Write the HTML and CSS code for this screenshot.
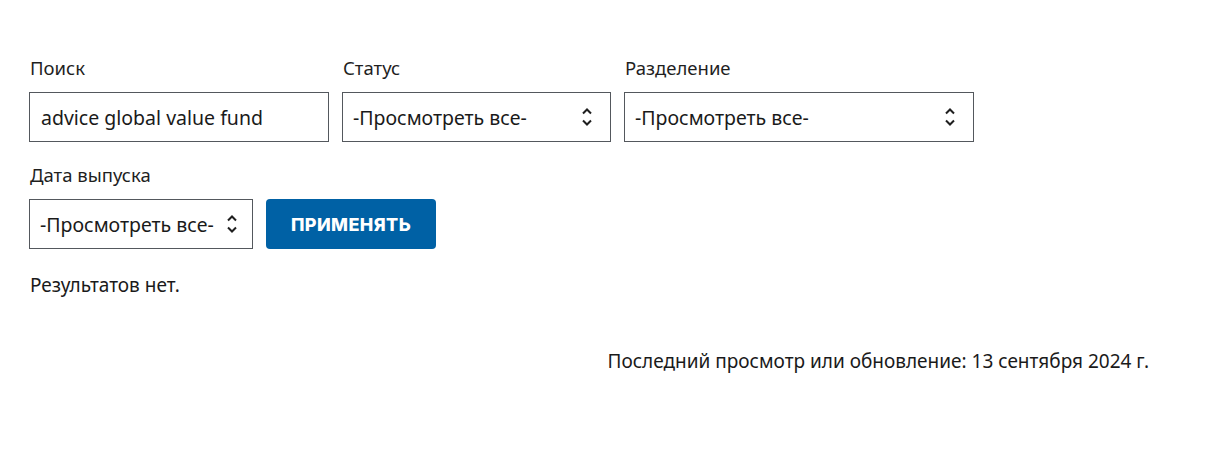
FILE: index.html
```html
<!DOCTYPE html>
<html lang="ru">
<head>
<meta charset="utf-8">
<title>Поиск</title>
<link rel="stylesheet" href="styles.css">
</head>
<body>
<div class="page">
  <form class="filters">
    <div class="row">
      <div class="field">
        <label class="label">Поиск</label>
        <div class="box box-search">advice global value fund</div>
      </div>
      <div class="field">
        <label class="label">Статус</label>
        <div class="box box-select box-status">
          <span>-Просмотреть все-</span>
          <svg class="chev" width="12" height="22" viewBox="0 0 12 22"><path d="M2 7.5 L6 3.5 L10 7.5 M2 14.5 L6 18.5 L10 14.5" fill="none" stroke="#1f1f1f" stroke-width="2"/></svg>
        </div>
      </div>
      <div class="field">
        <label class="label">Разделение</label>
        <div class="box box-select box-division">
          <span>-Просмотреть все-</span>
          <svg class="chev" width="12" height="22" viewBox="0 0 12 22"><path d="M2 7.5 L6 3.5 L10 7.5 M2 14.5 L6 18.5 L10 14.5" fill="none" stroke="#1f1f1f" stroke-width="2"/></svg>
        </div>
      </div>
    </div>
    <div class="row row-2">
      <div class="field">
        <label class="label label-2">Дата выпуска</label>
        <div class="field-line">
          <div class="box box-select box-date">
            <span>-Просмотреть все-</span>
            <svg class="chev" width="12" height="22" viewBox="0 0 12 22"><path d="M2 7.5 L6 3.5 L10 7.5 M2 14.5 L6 18.5 L10 14.5" fill="none" stroke="#1f1f1f" stroke-width="2"/></svg>
          </div>
          <button type="button" class="apply">ПРИМЕНЯТЬ</button>
        </div>
      </div>
    </div>
  </form>
  <p class="empty">Результатов нет.</p>
  <p class="updated">Последний просмотр или обновление: 13 сентября 2024 г.</p>
</div>
</body>
</html>
```

FILE: styles.css
```css
* { box-sizing: border-box; }
html, body { margin: 0; padding: 0; background: #fff; }
body {
  font-family: "Noto Sans", "Open Sans", sans-serif;
  color: #1a1a1a;
}
.page {
  padding: 56px 83px 0 29px;
}
.filters { display: flex; flex-direction: column; }
.row { display: flex; gap: 13px; }
.row-2 { margin-top: 21px; }
.field { display: flex; flex-direction: column; }
.label {
  font-size: 18.5px;
  line-height: 24px;
  height: 24px;
  margin-bottom: 12px;
  padding-left: 1px;
  color: #1f1f1f;
}
.box {
  height: 50px;
  border: 1px solid #54585d;
  display: flex;
  align-items: center;
  font-size: 19.5px;
  color: #1a1a1a;
  background: #fff;
}
.box-search { width: 300px; padding-left: 11px; }
.box-select { justify-content: space-between; padding: 0 17px 0 10px; }
.box-status { width: 269px; }
.box-division { width: 350px; }
.box-date { width: 224px; padding-right: 14px; }
.chev { display: block; flex: none; }
.field-line { display: flex; gap: 13px; }
.apply {
  width: 170px;
  height: 50px;
  border: none;
  border-radius: 4px;
  background: #0061a5;
  color: #fff;
  font-family: Inter, "Noto Sans", sans-serif;
  font-weight: 800;
  font-size: 18px;
  letter-spacing: 0.4px;
  cursor: pointer;
}
.empty {
  margin: 24px 0 0 1px;
  font-size: 19px;
  line-height: 24px;
}
.updated {
  margin: 52px 0 0;
  text-align: right;
  font-size: 19px;
  line-height: 24px;
}
```
